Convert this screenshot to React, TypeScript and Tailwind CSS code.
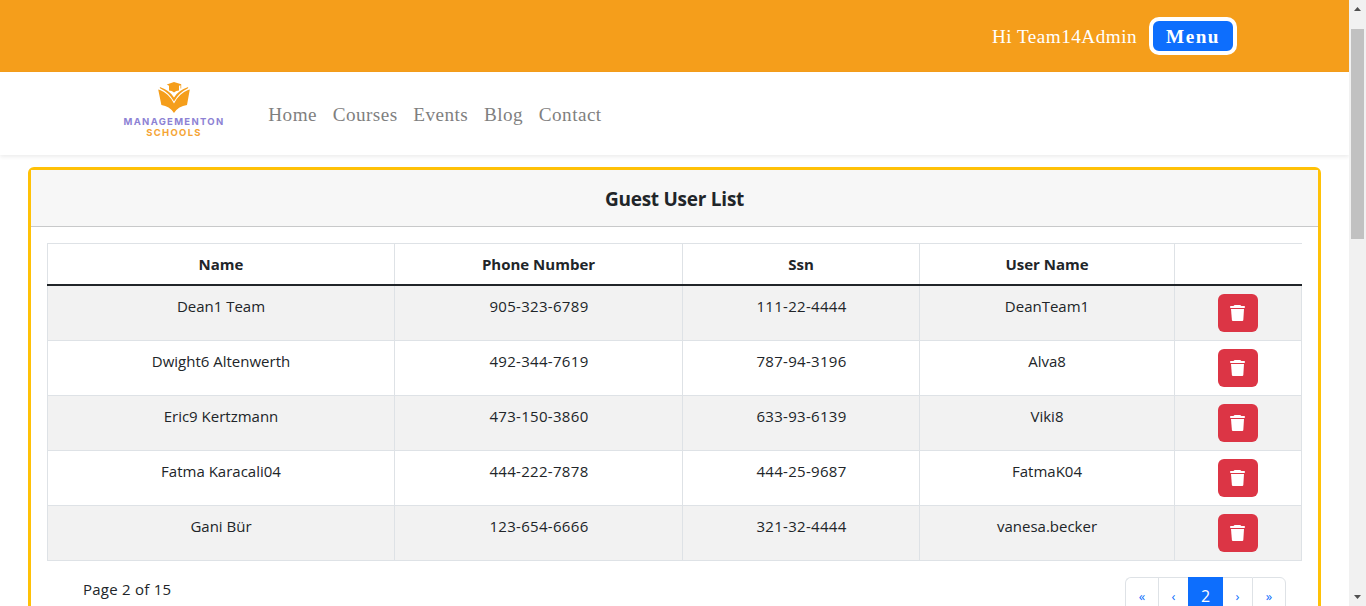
const users = [
  { name: "Dean1 Team", phone: "905-323-6789", ssn: "111-22-4444", user: "DeanTeam1" },
  { name: "Dwight6 Altenwerth", phone: "492-344-7619", ssn: "787-94-3196", user: "Alva8" },
  { name: "Eric9 Kertzmann", phone: "473-150-3860", ssn: "633-93-6139", user: "Viki8" },
  { name: "Fatma Karacali04", phone: "444-222-7878", ssn: "444-25-9687", user: "FatmaK04" },
  { name: "Gani Bür", phone: "123-654-6666", ssn: "321-32-4444", user: "vanesa.becker" },
];

const columns = "grid grid-cols-[347px_288px_237px_255px_128px]";

function Logo() {
  return (
    <div className="flex w-[104px] flex-col items-center font-['Inter',sans-serif]">
      <svg width="32" height="31" viewBox="0 0 32 31" fill="#f59e1b">
        <path d="M16 0 L23.200 2.200 V6.500 H22.500 V3.200 L21 3.800 V8.600 Q18 8.600 16 10.600 Q14 8.600 11 8.600 V3.800 L8.800 2.600 Z" />
        <path d="M1.800 5 Q12 8.500 16 15.500 Q20 8.500 30.200 5 L30 6.300 Q20.500 11 16 19.500 Q11.500 11 2 6.300 Z" />
        <path d="M0.200 7.500 L2 8 Q11 11.500 16 21.500 Q21 11.500 30 8 L31.800 7.500 L29 23 Q20.500 24 16 31 Q11.500 24 3.400 23 Z" />
      </svg>
      <div className="mt-[2px] text-[9.5px] leading-[13px] font-bold tracking-[1.3px] whitespace-nowrap text-[#8d82d4]">
        MANAGEMENTON
      </div>
      <div className="-mt-[2px] text-[9.5px] leading-[13px] font-bold tracking-[1.3px] text-[#f5a535]">SCHOOLS</div>
    </div>
  );
}

function TrashIcon() {
  return (
    <svg width="16" height="16" viewBox="0 0 16 16" fill="#fff">
      <path d="M0.200 1 H3.500 Q4 0 5 0 H9.800 Q10.800 0 11.300 1 H14.800 V3 H0.200 Z" />
      <path d="M1 4 H14 L13.300 15 Q13.200 16 12.400 16 H2.800 Q2 16 1.900 15 Z" />
    </svg>
  );
}

function Scrollbar() {
  return (
    <div className="flex h-full w-[17px] shrink-0 flex-col items-center bg-[#f1f1f1]">
      <svg className="shrink-0" width="17" height="17" viewBox="0 0 17 17" fill="#505050">
        <path d="M5 11 L8.500 7 L12 11 Z" />
      </svg>
      <div className="mt-3 mr-px h-[210px] w-[13px] bg-[#c1c1c1]" />
      <svg className="mt-auto shrink-0" width="17" height="17" viewBox="0 0 17 17" fill="#505050">
        <path d="M5 6 L12 6 L8.500 10 Z" />
      </svg>
    </div>
  );
}

export default function App() {
  return (
    <div className="flex h-[606px] w-[1366px] overflow-hidden bg-white font-['Open_Sans','Noto_Sans',sans-serif] text-[#212529]">
      <div className="flex w-[1349px] shrink-0 flex-col">
        <header className="flex h-[72px] shrink-0 items-center justify-end bg-[#f59e1b] pr-28 font-['Liberation_Serif',serif]">
          <span className="mr-[12px] pt-px text-[19.2px] leading-[30px] tracking-[0.47px] text-white">Hi Team14Admin</span>
          <button className="flex h-[38px] w-[88px] items-center justify-center rounded-[10px] border-4 border-white bg-[#0d6efd] pt-[3px] text-[19.2px] font-bold tracking-[1.5px] text-white">
            Menu
          </button>
        </header>

        <nav className="flex h-[83px] shrink-0 items-start bg-white pt-[10px] pl-[122px] shadow-[0_2px_4px_rgba(0,0,0,0.075)]">
          <Logo />
          <div className="mt-[18px] ml-[42.3px] flex gap-[15.7px] font-['Liberation_Serif',serif] text-[19.2px] leading-[30px] tracking-[0.45px] text-[#7f7f7f]">
            <a>Home</a>
            <a>Courses</a>
            <a>Events</a>
            <a>Blog</a>
            <a>Contact</a>
          </div>
        </nav>

        <main className="mt-3 ml-7 h-[600px] w-[1293px] shrink-0 rounded-md border-[3px] border-[#ffc107]">
          <h1 className="flex h-[57px] items-center justify-center border-b border-[#c8c9ca] bg-[#f7f7f7] pt-[3px] text-[19px] font-bold tracking-[-0.25px]">
            Guest User List
          </h1>

          <div className="mt-4 ml-4 w-[1255px] text-[15px] leading-6">
            <div className={`${columns} h-[43px] border-t border-b-2 border-t-[#dee2e6] border-b-[#212529] text-center font-bold`}>
              <div className="border-l border-[#dee2e6] pt-2">Name</div>
              <div className="border-l border-[#dee2e6] pt-2">Phone Number</div>
              <div className="border-l border-[#dee2e6] pt-2">Ssn</div>
              <div className="border-l border-[#dee2e6] pt-2">User Name</div>
              <div className="border-l border-[#dee2e6]" />
            </div>
            {users.map((u) => (
              <div key={u.name} className={`${columns} h-[55px] border-b border-[#dee2e6] text-center odd:bg-white even:bg-[#f2f2f2]`}>
                <div className="border-l border-[#dee2e6] pt-2">{u.name}</div>
                <div className="border-l border-[#dee2e6] pt-2 pl-px tracking-[0.3px]">{u.phone}</div>
                <div className="border-l border-[#dee2e6] pt-2 pl-px tracking-[0.3px]">{u.ssn}</div>
                <div className="border-l border-[#dee2e6] pt-2">{u.user}</div>
                <div className="flex justify-center border-x border-[#dee2e6] pt-2">
                  <button className="flex h-[38px] w-10 items-center justify-center rounded-md bg-[#dc3545]">
                    <TrashIcon />
                  </button>
                </div>
              </div>
            ))}
          </div>

          <div className="mt-4 flex items-start justify-between pr-8 pl-[52px] text-[15px] leading-6">
            <span className="tracking-[0.25px]">Page 2 of 15</span>
            <div className="flex h-[38px] w-[161px] text-[13px] text-[#0d6efd]">
              <button className="w-[33px] rounded-l-md border border-r-0 border-[#dee2e6]">«</button>
              <button className="w-[30px] border border-r-0 border-[#dee2e6]">‹</button>
              <button className="w-[35px] bg-[#0d6efd] text-[16px] text-white">2</button>
              <button className="w-[29px] border-y border-[#dee2e6]">›</button>
              <button className="w-[34px] rounded-r-md border border-[#dee2e6]">»</button>
            </div>
          </div>
        </main>
      </div>
      <Scrollbar />
    </div>
  );
}
